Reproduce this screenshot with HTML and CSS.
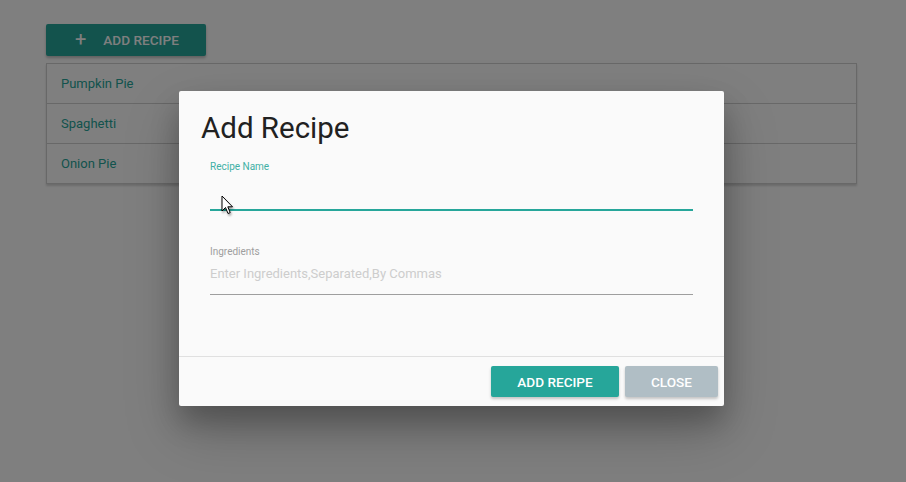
FILE: index.html
```html
<!DOCTYPE html>
<html>
<head>
<meta charset="utf-8">
<link rel="stylesheet" href="styles.css">
</head>
<body>
<div class="page">
  <button class="btn-top"><span class="plus">+</span>ADD RECIPE</button>
  <ul class="list">
    <li>Pumpkin Pie</li>
    <li>Spaghetti</li>
    <li>Onion Pie</li>
  </ul>
</div>
<div class="overlay"></div>
<div class="modal">
  <div class="modal-content">
    <h4 class="title">Add Recipe</h4>
    <div class="field active">
      <label>Recipe Name</label>
      <div class="input"></div>
    </div>
    <div class="field">
      <label>Ingredients</label>
      <div class="input placeholder">Enter Ingredients,Separated,By Commas</div>
    </div>
  </div>
  <div class="modal-footer">
    <button class="btn btn-add">ADD RECIPE</button>
    <button class="btn btn-close">CLOSE</button>
  </div>
</div>
<svg class="cursor" width="14" height="22" viewBox="0 0 14 22"><path d="M1 1 L1 16 L4.5 12.5 L7 18.5 L9.2 17.6 L6.8 11.8 L11.5 11.8 Z" fill="#fff" stroke="#000" stroke-width="1"/></svg>
</body>
</html>
```
FILE: styles.css
```css
html, body { margin: 0; padding: 0; }
body {
  width: 906px; height: 482px; overflow: hidden;
  background: #fff;
  font-family: Roboto, "Noto Sans", sans-serif;
  position: relative;
}
.page { padding: 24px 49px 0 46px; }
.btn-top {
  display: flex; align-items: center;
  width: 160px; height: 32px;
  border: none; border-radius: 2px;
  background: #26a69a; color: #fff;
  font-family: Roboto, sans-serif; font-size: 13.6px; font-weight: 500;
  padding: 0 0 0 29px;
  box-shadow: 0 2px 3px rgba(0,0,0,0.25);
}
.plus { font-size: 20px; font-weight: 400; margin-right: 17px; line-height: 1; position: relative; top: -1px; }
.list {
  list-style: none; margin: 7px 0 0; padding: 0;
  border: 1px solid #d0d0d0;
  box-shadow: 0 2px 2px rgba(0,0,0,0.16);
}
.list li {
  height: 39px; line-height: 39px;
  padding-left: 14px;
  color: #26a69a; font-size: 13px;
  border-bottom: 1px solid #d0d0d0;
}
.list li:last-child { border-bottom: none; }
.overlay {
  position: absolute; inset: 0;
  background: rgba(0,0,0,0.5);
}
.modal {
  position: absolute; left: 179px; top: 91px;
  width: 545px; height: 315px;
  background: #fafafa;
  border-radius: 2px;
  box-shadow: 0 16px 28px rgba(0,0,0,0.22), 0 25px 55px rgba(0,0,0,0.21);
  display: flex; flex-direction: column;
}
.modal-content { flex: 1; padding: 18px 31px 0 31px; }
.title {
  margin: 0 0 0 -9px;
  font-size: 29.5px; font-weight: 400; color: #212121;
  line-height: 38px;
}
.field { margin-top: 13px; }
.field + .field { margin-top: 34px; }
.field label {
  display: block; font-size: 10px; color: #9e9e9e; line-height: 14px;
}
.field.active label { color: #3fb0a5; }
.input {
  height: 34px; border-bottom: 1px solid #9e9e9e;
  font-size: 13px; line-height: 28px;
  margin-top: 0;
}
.field.active .input { height: 33px; border-bottom: 2px solid #26a69a; margin-top: 2px; }
.placeholder { color: #cdcdcd; margin-top: 1px; }
.modal-footer {
  height: 50px; border-top: 1px solid #e0e0e0;
  display: flex; justify-content: flex-end; align-items: flex-start;
  gap: 6px; padding: 9px 6px 0 0; box-sizing: border-box;
}
.btn {
  height: 31px; border: none; border-radius: 2px;
  color: #fff; font-family: Roboto, sans-serif; font-size: 13.6px; font-weight: 500;
  box-shadow: 0 2px 3px rgba(0,0,0,0.22);
}
.btn-add { width: 128px; background: #26a69a; }
.btn-close { width: 93px; background: #b0bec5; }
.cursor { position: absolute; left: 221px; top: 195px; filter: drop-shadow(1px 2px 1px rgba(0,0,0,0.35)); }
```
